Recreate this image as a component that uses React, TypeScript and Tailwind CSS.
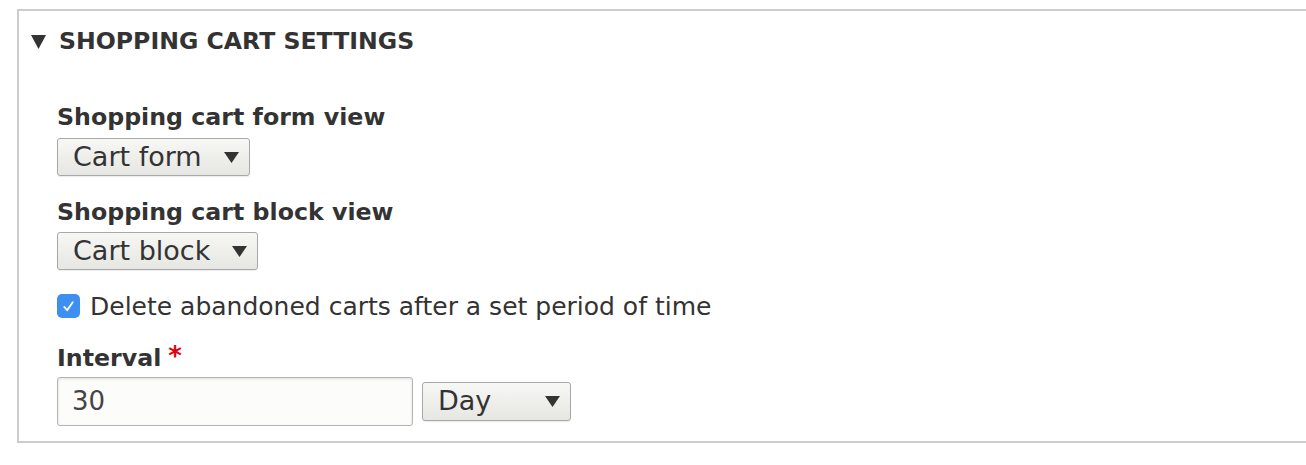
function Caret({ className }: { className: string }) {
  return (
    <svg viewBox="0 0 15 11" className={className} fill="#333">
      <path d="M0 0H15L7.5 11Z" />
    </svg>
  );
}

function Select({ label, width, height }: { label: string; width: string; height: string }) {
  return (
    <div
      className={`flex items-center justify-between ${height} ${width} pl-[15px] pr-[10px] rounded-[3px] border border-[#a8a8a8] bg-gradient-to-b from-[#f7f7f5] to-[#e6e6e2] shadow-[0_1px_1px_rgba(0,0,0,0.08)] text-[27px] leading-none text-[#333]`}
    >
      <span className="-mt-[2px]">{label}</span>
      <Caret className="w-[15px] h-[11px]" />
    </div>
  );
}

export default function App() {
  return (
    <div className="w-[1306px] h-[465px] bg-white pt-[9px] pl-[17px] font-['DejaVu_Sans',sans-serif] text-[#333]">
      <div className="h-[434px] border-2 border-r-0 border-[#cccccc]">
        <div className="flex items-center h-[62px] pl-[12px]">
          <svg viewBox="0 0 15 14" className="w-[15px] h-[14px] mr-[13px]" fill="#333">
            <path d="M0 0H15L7.5 14Z" />
          </svg>
          <h2 className="text-[23.6px] font-bold leading-none">SHOPPING CART SETTINGS</h2>
        </div>

        <div className="pl-[38px] pt-[29px]">
          <label className="block text-[23.7px] font-bold leading-[30px]">Shopping cart form view</label>
          <div className="mt-[6px]">
            <Select label="Cart form" width="w-[193px]" height="h-[38px]" />
          </div>

          <label className="block text-[23.7px] font-bold leading-[30px] mt-[21px]">Shopping cart block view</label>
          <div className="mt-[5px]">
            <Select label="Cart block" width="w-[201px]" height="h-[38px]" />
          </div>

          <div className="flex items-center mt-[21px] h-[30px]">
            <span className="flex items-center justify-center w-[23px] h-[24px] rounded-[5px] bg-[#3d8ff0] mr-[10px]">
              <svg viewBox="0 0 16 16" className="w-[15px] h-[15px]" fill="none" stroke="white" strokeWidth={2} strokeLinecap="round" strokeLinejoin="round">
                <path d="M3.5 8.5L6.5 12L12.5 3.5" />
              </svg>
            </span>
            <span className="text-[25px] leading-none">Delete abandoned carts after a set period of time</span>
          </div>

          <label className="flex items-start text-[23.7px] font-bold leading-[30px] mt-[22px]">
            Interval <span className="text-[#e3000f] ml-[7px] text-[26px] leading-[26px]">*</span>
          </label>
          <div className="flex items-center gap-[9px] mt-[4px]">
            <div className="flex items-center w-[356px] h-[49px] pl-[14px] rounded-[3px] border border-[#b4b4b4] bg-[#fcfcfa] shadow-[inset_0_1px_3px_rgba(0,0,0,0.12)] text-[26px] text-[#444]">
              30
            </div>
            <Select label="Day" width="w-[149px]" height="h-[39px]" />
          </div>
        </div>
      </div>
    </div>
  );
}
